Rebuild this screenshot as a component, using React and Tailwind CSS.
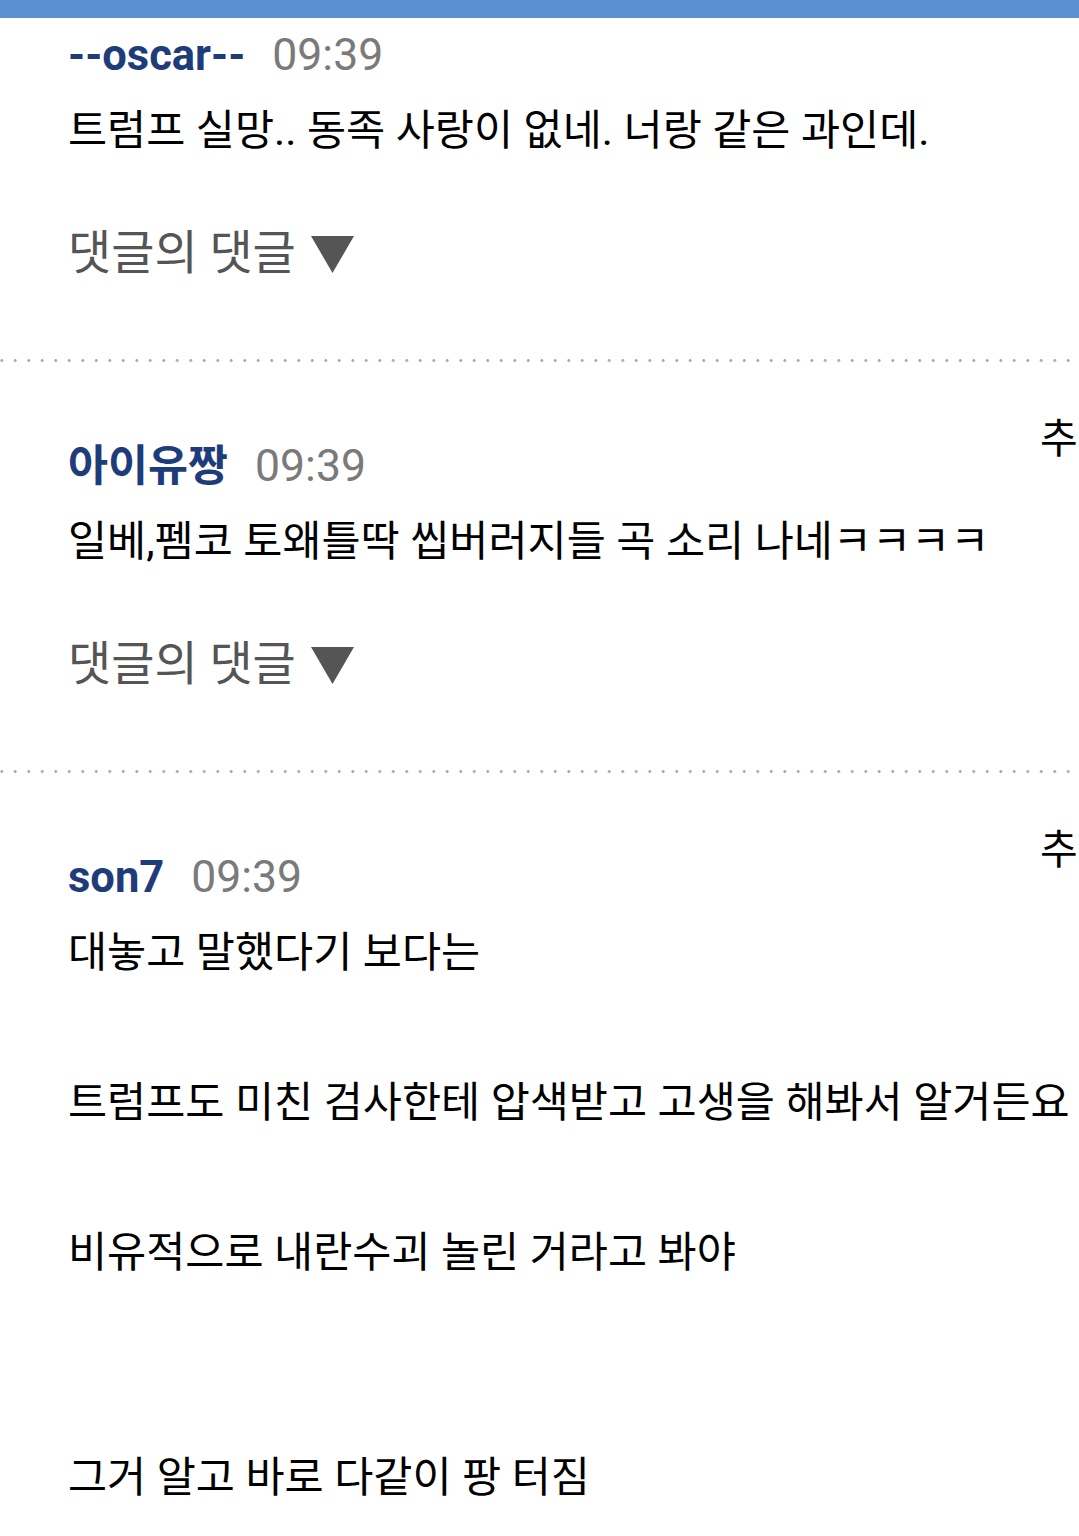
const FONT = "font-['Roboto','Noto_Sans_CJK_KR',sans-serif]";

const comments = [
  {
    id: 1,
    name: "--oscar--",
    time: "09:39",
    lines: ["트럼프 실망.. 동족 사랑이 없네. 너랑 같은 과인데."],
    replies: true,
    cutTop: true,
  },
  {
    id: 2,
    name: "아이유짱",
    time: "09:39",
    lines: ["일베,펨코 토왜틀딱 씹버러지들 곡 소리 나네ㅋㅋㅋㅋ"],
    replies: true,
  },
  {
    id: 3,
    name: "son7",
    time: "09:39",
    lines: [
      "대놓고 말했다기 보다는",
      "",
      "트럼프도 미친 검사한테 압색받고 고생을 해봐서 알거든요",
      "",
      "비유적으로 내란수괴 놀린 거라고 봐야",
      "",
      "",
      "그거 알고 바로 다같이 팡 터짐",
    ],
  },
];

function Divider() {
  return (
    <div className="h-[3px] w-full bg-[radial-gradient(circle,#a8a8a8_1.3px,transparent_1.6px)] bg-[length:13.5px_3px] bg-[position:-5px_0] bg-repeat-x" />
  );
}

function Comment({ c }) {
  return (
    <div className={`relative pl-[68px] ${c.cutTop ? "pt-0" : "pt-[67px]"}`}>
      {!c.cutTop && (
        <span className="absolute left-[1040px] top-[40px] whitespace-nowrap text-[41px] leading-[75px] text-black">
          추천
        </span>
      )}
      <div className="flex items-center gap-[27px] leading-[75px] whitespace-nowrap">
        <span className="text-[43.5px] font-bold text-[#1f3c7a]">{c.name}</span>
        <span className="text-[44.5px] text-[#7a7a7a]">{c.time}</span>
      </div>
      <div className="text-[42.5px] leading-[75px] text-black whitespace-nowrap">
        {c.lines.map((l, i) => (
          <div key={i} className="h-[75px]">
            {l}
          </div>
        ))}
      </div>
      {c.replies && (
        <div className="mt-[48px] mb-[68px] flex items-center gap-[15px] h-[75px] text-[47px] text-[#555555]">
          <span>댓글의 댓글</span>
          <svg width="43" height="37" viewBox="0 0 43 37" className="mt-[2px]">
            <polygon points="0,0 43,0 21.5,37" fill="#555555" />
          </svg>
        </div>
      )}
    </div>
  );
}

export default function App() {
  return (
    <div className={`w-[1079px] h-[1536px] overflow-hidden bg-white ${FONT}`}>
      <div className="h-[18px] bg-[#5b8fd3]" />
      {comments.map((c, i) => (
        <div key={c.id}>
          <Comment c={c} />
          {i < comments.length - 1 && <Divider />}
        </div>
      ))}
    </div>
  );
}
